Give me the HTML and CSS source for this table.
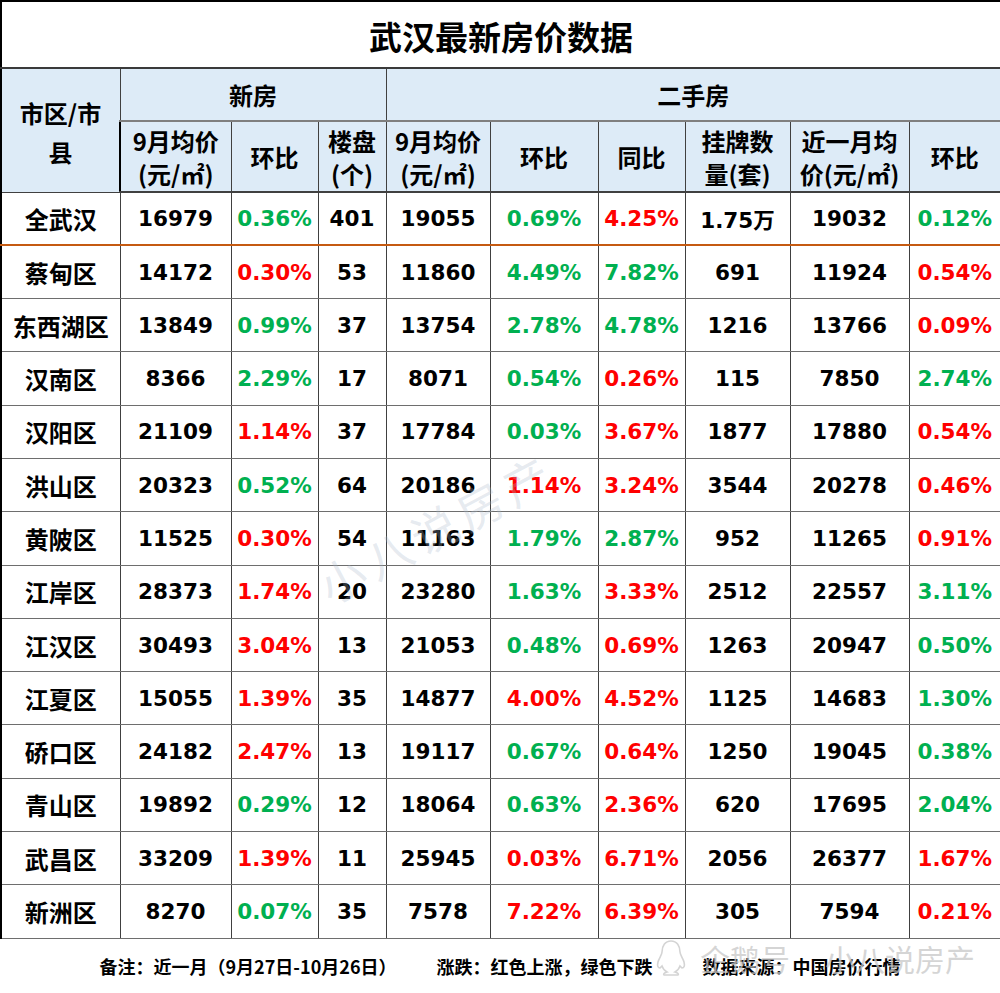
FILE: index.html
```html
<!DOCTYPE html>
<html lang="zh-CN">
<head>
<meta charset="utf-8">
<title>武汉最新房价数据</title>
<link rel="stylesheet" href="styles.css">
</head>
<body>
<div class="sheet">
  <table class="grid">
    <colgroup>
      <col class="c1"><col class="c2"><col class="c3"><col class="c4"><col class="c5">
      <col class="c6"><col class="c7"><col class="c8"><col class="c9"><col class="c10">
    </colgroup>
    <tr class="title-row"><td colspan="10" class="title">武汉最新房价数据</td></tr>
    <tr class="head1">
      <td rowspan="2" class="hd">市区/市<br>县</td>
      <td colspan="3" class="hd">新房</td>
      <td colspan="6" class="hd">二手房</td>
    </tr>
    <tr class="head2">
      <td class="hd">9月均价<br>(元/㎡)</td>
      <td class="hd">环比</td>
      <td class="hd">楼盘<br>(个)</td>
      <td class="hd">9月均价<br>(元/㎡)</td>
      <td class="hd">环比</td>
      <td class="hd">同比</td>
      <td class="hd">挂牌数<br>量(套)</td>
      <td class="hd">近一月均<br>价(元/㎡)</td>
      <td class="hd">环比</td>
    </tr>
    <tr class="row total">
      <td class="name">全武汉</td><td>16979</td><td class="g">0.36%</td><td>401</td><td>19055</td><td class="g">0.69%</td><td class="r">4.25%</td><td>1.75万</td><td>19032</td><td class="g">0.12%</td>
    </tr>
    <tr class="row">
      <td class="name">蔡甸区</td><td>14172</td><td class="r">0.30%</td><td>53</td><td>11860</td><td class="g">4.49%</td><td class="g">7.82%</td><td>691</td><td>11924</td><td class="r">0.54%</td>
    </tr>
    <tr class="row">
      <td class="name">东西湖区</td><td>13849</td><td class="g">0.99%</td><td>37</td><td>13754</td><td class="g">2.78%</td><td class="g">4.78%</td><td>1216</td><td>13766</td><td class="r">0.09%</td>
    </tr>
    <tr class="row">
      <td class="name">汉南区</td><td>8366</td><td class="g">2.29%</td><td>17</td><td>8071</td><td class="g">0.54%</td><td class="r">0.26%</td><td>115</td><td>7850</td><td class="g">2.74%</td>
    </tr>
    <tr class="row">
      <td class="name">汉阳区</td><td>21109</td><td class="r">1.14%</td><td>37</td><td>17784</td><td class="g">0.03%</td><td class="r">3.67%</td><td>1877</td><td>17880</td><td class="r">0.54%</td>
    </tr>
    <tr class="row">
      <td class="name">洪山区</td><td>20323</td><td class="g">0.52%</td><td>64</td><td>20186</td><td class="r">1.14%</td><td class="r">3.24%</td><td>3544</td><td>20278</td><td class="r">0.46%</td>
    </tr>
    <tr class="row">
      <td class="name">黄陂区</td><td>11525</td><td class="r">0.30%</td><td>54</td><td>11163</td><td class="g">1.79%</td><td class="g">2.87%</td><td>952</td><td>11265</td><td class="r">0.91%</td>
    </tr>
    <tr class="row">
      <td class="name">江岸区</td><td>28373</td><td class="r">1.74%</td><td>20</td><td>23280</td><td class="g">1.63%</td><td class="r">3.33%</td><td>2512</td><td>22557</td><td class="g">3.11%</td>
    </tr>
    <tr class="row">
      <td class="name">江汉区</td><td>30493</td><td class="r">3.04%</td><td>13</td><td>21053</td><td class="g">0.48%</td><td class="r">0.69%</td><td>1263</td><td>20947</td><td class="g">0.50%</td>
    </tr>
    <tr class="row">
      <td class="name">江夏区</td><td>15055</td><td class="r">1.39%</td><td>35</td><td>14877</td><td class="r">4.00%</td><td class="r">4.52%</td><td>1125</td><td>14683</td><td class="g">1.30%</td>
    </tr>
    <tr class="row">
      <td class="name">硚口区</td><td>24182</td><td class="r">2.47%</td><td>13</td><td>19117</td><td class="g">0.67%</td><td class="r">0.64%</td><td>1250</td><td>19045</td><td class="g">0.38%</td>
    </tr>
    <tr class="row">
      <td class="name">青山区</td><td>19892</td><td class="g">0.29%</td><td>12</td><td>18064</td><td class="g">0.63%</td><td class="r">2.36%</td><td>620</td><td>17695</td><td class="g">2.04%</td>
    </tr>
    <tr class="row">
      <td class="name">武昌区</td><td>33209</td><td class="r">1.39%</td><td>11</td><td>25945</td><td class="r">0.03%</td><td class="r">6.71%</td><td>2056</td><td>26377</td><td class="r">1.67%</td>
    </tr>
    <tr class="row">
      <td class="name">新洲区</td><td>8270</td><td class="g">0.07%</td><td>35</td><td>7578</td><td class="r">7.22%</td><td class="r">6.39%</td><td>305</td><td>7594</td><td class="r">0.21%</td>
    </tr>
  </table>
  <div class="note">
    <span class="n1">备注：近一月（9月27日-10月26日）</span>
    <span class="n2">涨跌：红色上涨，绿色下跌</span>
    <span class="n3">数据来源：中国房价行情</span>
  </div>
  <div class="wm-center">小八说房产</div>
  <div class="wm-corner">
    <svg class="penguin" width="30" height="38" viewBox="0 0 30 38">
      <path d="M15 2c-6 0-9 5-9 11 0 3-3 6-4 10-1 4 0 6 2 6l2-2c1 3 3 5 5 6-3 1-4 2-3 3h14c1-1 0-2-3-3 2-1 4-3 5-6l2 2c2 0 3-2 2-6-1-4-4-7-4-10 0-6-3-11-9-11z" fill="rgba(255,255,255,0.6)" stroke="#d4d4d4" stroke-width="1.6"/>
    </svg>
    <span class="wm-text">企鹅号</span>
    <span class="wm-text wm-name">小八说房产</span>
  </div>
</div>
</body>
</html>
```

FILE: styles.css
```css
html, body {
  margin: 0;
  padding: 0;
  background: #ffffff;
}

.sheet {
  position: relative;
  width: 1000px;
  height: 993px;
  overflow: hidden;
  background: #ffffff;
}

.grid {
  border-collapse: collapse;
  table-layout: fixed;
  width: 1000px;
  font-family: "DejaVu Sans", "Noto Sans CJK SC", sans-serif;
  font-weight: bold;
  color: #000;
}

.c1 { width: 119px; }
.c2 { width: 111px; }
.c3 { width: 87px; }
.c4 { width: 68px; }
.c5 { width: 104px; }
.c6 { width: 108px; }
.c7 { width: 87px; }
.c8 { width: 105px; }
.c9 { width: 119px; }
.c10 { width: 92px; }

.grid td {
  padding: 0;
  text-align: center;
  vertical-align: middle;
  border: 1px solid #404040;
  white-space: nowrap;
}

.title-row { height: 67px; }
.grid td.title {
  font-family: "Noto Sans CJK SC", sans-serif;
  font-size: 33px;
  border: 2px solid #000;
  border-bottom: 2px solid #3a3a3a;
  padding-top: 2px;
}

.head1 { height: 53px; }
.head2 { height: 71px; }

.grid td.hd {
  background: #ddebf7;
  font-family: "Noto Sans CJK SC", sans-serif;
  font-size: 24px;
  line-height: 36px;
}

.head1 td.hd:first-child {
  line-height: 39px;
  padding-top: 4px;
}

.head2 td.hd {
  line-height: 33px;
  border-top: 2px solid #7f7f7f;
  border-bottom: 2px solid #404040;
}

.row { height: 53.3px; }
.row td {
  font-size: 21.5px;
  border-top: 1px solid #6e6e6e;
  border-bottom: 1px solid #6e6e6e;
}

.row.total td {
  border-bottom: 2px solid #c55a11;
}

.grid td.name {
  font-family: "Noto Sans CJK SC", sans-serif;
  font-size: 24px;
}

.grid td:first-child { border-left: 2px solid #000; }
.grid td:last-child { border-right: 2px solid #000; }

.g { color: #00b050; }
.r { color: #ff0000; }

.note {
  display: flex;
  justify-content: center;
  align-items: center;
  height: 54px;
  font-family: "Noto Sans CJK SC", sans-serif;
  font-weight: bold;
  font-size: 18px;
  color: #000;
  gap: 40px;
  padding-bottom: 1px;
}

.note .n3 { margin-left: 10px; }

.wm-center {
  position: absolute;
  left: 286px;
  top: 494px;
  width: 300px;
  text-align: center;
  white-space: nowrap;
  font-family: "Noto Sans CJK SC", sans-serif;
  font-size: 46px;
  letter-spacing: 6px;
  color: rgba(170, 185, 205, 0.3);
  transform: rotate(-28deg);
  pointer-events: none;
}

.wm-corner {
  position: absolute;
  left: 656px;
  top: 936px;
  display: flex;
  align-items: center;
  gap: 14px;
  pointer-events: none;
}

.wm-text {
  font-family: "Noto Sans CJK SC", sans-serif;
  font-size: 30px;
  color: rgba(200, 200, 200, 0.75);
}

.wm-name { margin-left: 21px; }
```
